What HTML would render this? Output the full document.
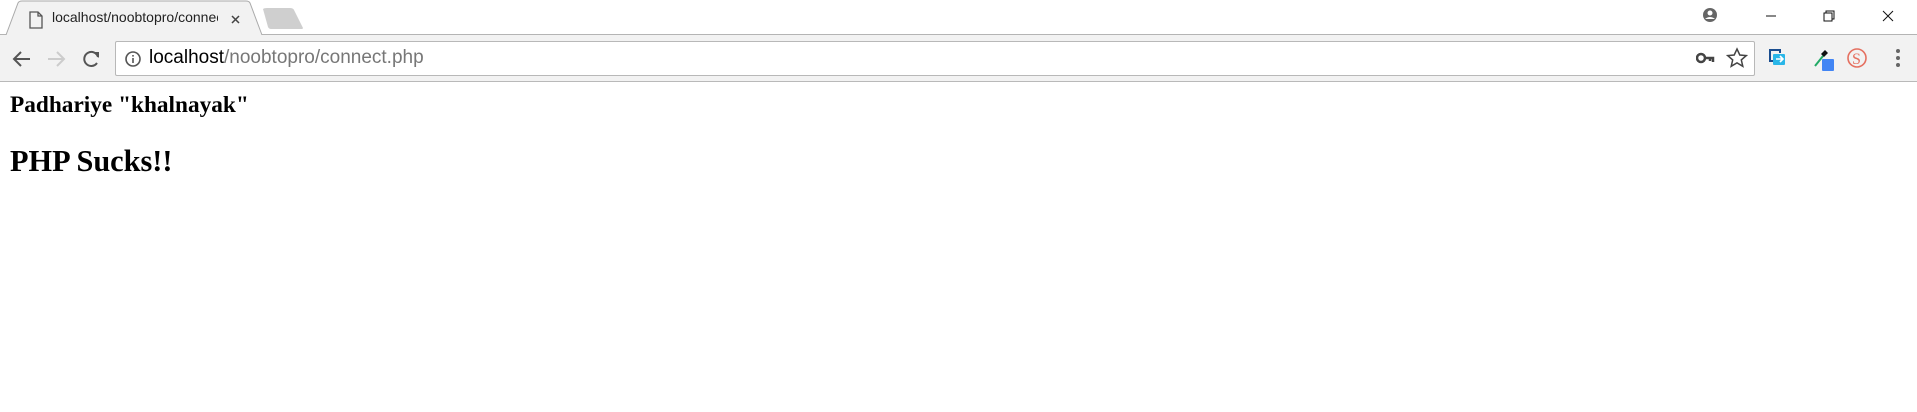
<!DOCTYPE html><html><head><style>
body{margin:0;width:1917px;height:412px;background:#fff;position:relative;overflow:hidden;font-family:"Liberation Sans",sans-serif}
.a{position:absolute}
</style></head><body>
<div class="a" style="left:0;top:34px;width:1917px;height:1px;background:#b4b4b4"></div>
<svg class="a" style="left:0;top:0" width="320" height="36"><path d="M6 35 L18 3 Q19 1 22 1 L246 1 Q249 1 250 3 L262 35" fill="#f2f2f2" stroke="#aaa"/><path d="M263 9 Q264 8 267 8 L290 8 Q293 8 294 10 L303 28 Q303 29 301 29 L271 29 Q269 29 268 27 Z" fill="#cfcfcf"/>
<path d="M30 12 h8 l4 4 v12 h-12 z M38 12 v4 h4" fill="none" stroke="#555" stroke-width="1.3"/>
<path d="M232 16 l7 7 M239 16 l-7 7" stroke="#444" stroke-width="1.5"/></svg>
<div class="a" style="left:52px;top:9px;font-size:14px;color:#222;white-space:nowrap;width:166px;overflow:hidden">localhost/noobtopro/connect.php</div>
<div class="a" style="left:0;top:35px;width:1917px;height:46px;background:#f2f2f2"></div>
<div class="a" style="left:0;top:81px;width:1917px;height:1px;background:#b9b9b9"></div>
<div class="a" style="left:115px;top:41px;width:1638px;height:33px;background:#fff;border:1px solid #b8b8b8;border-radius:2px"></div>
<svg class="a" style="left:0;top:35px" width="130" height="46"><g fill="none" stroke="#555" stroke-width="2"><path d="M30 24 H14 M21 17 l-7 7 7 7"/></g><g fill="none" stroke="#ccc" stroke-width="2"><path d="M48 24 H64 M57 17 l7 7 -7 7"/></g><path d="M98 22 A7 7 0 1 0 97 28" fill="none" stroke="#555" stroke-width="2"/><path d="M93 17 h6 v6 z" fill="#555"/></svg>
<svg class="a" style="left:124px;top:50px" width="18" height="18"><circle cx="9" cy="9" r="7" fill="none" stroke="#555" stroke-width="1.6"/><rect x="8.2" y="8" width="1.6" height="5" fill="#555"/><rect x="8.2" y="5" width="1.6" height="1.6" fill="#555"/></svg>
<div class="a" style="left:149px;top:47px;font-size:19px;color:#000;white-space:nowrap">localhost<span style="color:#777">/noobtopro/connect.php</span></div>
<svg class="a" style="left:1696px;top:47px" width="55" height="22"><circle cx="5" cy="11" r="4" fill="none" stroke="#444" stroke-width="2.5"/><path d="M9 11 h8 v4 M14 11 v3" stroke="#444" stroke-width="2.5" fill="none"/><path d="M41 2 l2.8 6 6.5.6 -5 4.3 1.5 6.4 -5.8-3.4 -5.8 3.4 1.5-6.4 -5-4.3 6.5-.6 z" fill="none" stroke="#444" stroke-width="1.5"/></svg>
<svg class="a" style="left:0;top:0" width="1917" height="82">
<circle cx="1710" cy="15" r="7" fill="#666"/><circle cx="1710" cy="13" r="2.5" fill="#fff"/><path d="M1705 19 q5 -4 10 0" fill="#fff"/>
<path d="M1766 16 h10" stroke="#111"/>
<rect x="1824" y="13" width="8" height="8" fill="none" stroke="#111"/><path d="M1826 13 v-2 h8 v8 h-2" fill="none" stroke="#111"/>
<path d="M1883 11 l10 10 M1893 11 l-10 10" stroke="#111"/>
<path d="M1770 52 v-2 h10 v3" fill="none" stroke="#1a4d8f" stroke-width="2"/><path d="M1770 52 v9 h3" fill="none" stroke="#1a4d8f" stroke-width="2"/><rect x="1773" y="54" width="12" height="11" rx="1" fill="#29b6e8"/><path d="M1776 59 h6 M1780 56 l3 3 -3 3" stroke="#fff" stroke-width="1.6" fill="none"/>
<path d="M1815 66 l8-10" stroke="#2a6" stroke-width="2"/><path d="M1821 54 l4 -4 3 3 -4 4z" fill="#111"/><rect x="1822" y="59" width="12" height="12" rx="1" fill="#4285f4"/>
<circle cx="1857" cy="58" r="9" fill="none" stroke="#e57060" stroke-width="1.6"/><text x="1852" y="64" font-size="16" fill="#e57060" font-family="Liberation Serif">S</text>
<circle cx="1898" cy="51" r="2" fill="#666"/><circle cx="1898" cy="58" r="2" fill="#666"/><circle cx="1898" cy="65" r="2" fill="#666"/></svg>
<div class="a" style="left:10px;top:92px;font:bold 23.3px 'Liberation Serif',serif;color:#000;line-height:26px">Padhariye "khalnayak"</div>
<div class="a" style="left:10px;top:144px;font:bold 30.3px 'Liberation Serif',serif;color:#000;line-height:34px">PHP Sucks!!</div>
</body></html>
